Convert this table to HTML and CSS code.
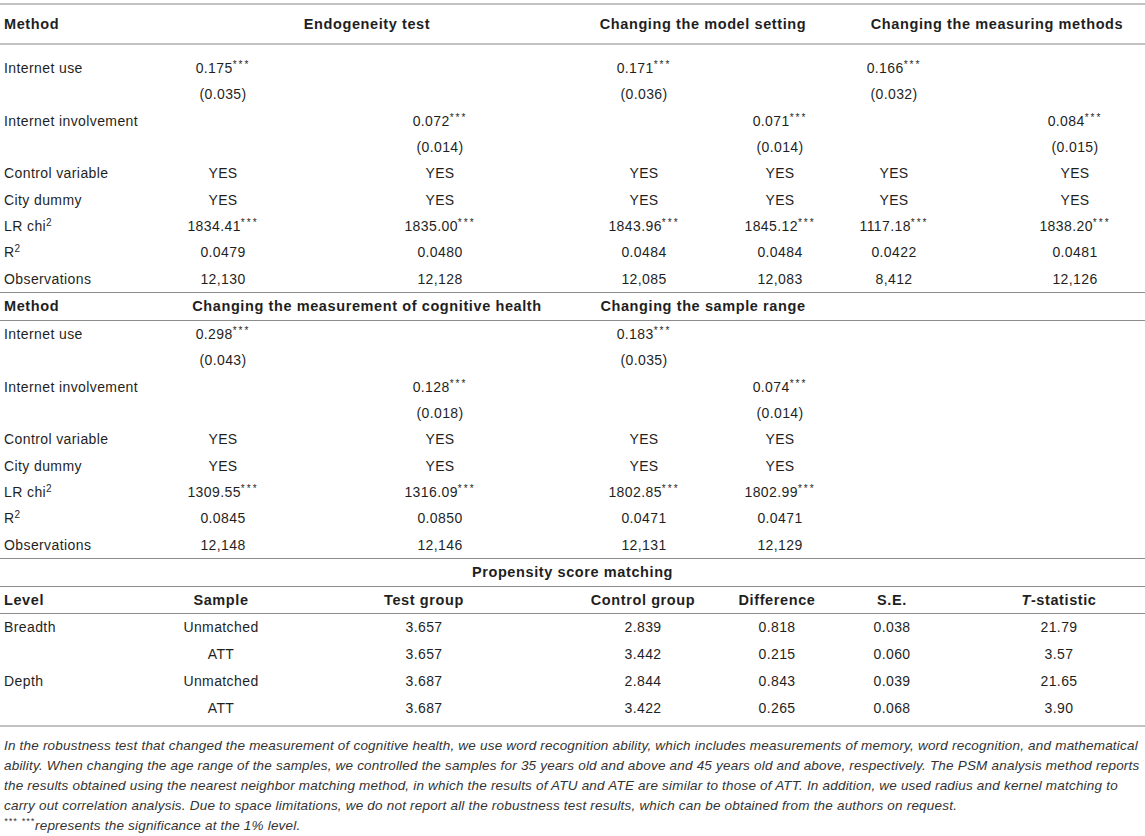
FILE: index.html
```html
<!DOCTYPE html>
<html lang="en">
<head>
  <meta charset="UTF-8">
  <meta name="viewport" content="width=device-width, initial-scale=1.0">
  <title>Robustness test</title>
  <link rel="stylesheet" href="styles.css">
</head>
<body>
  <div class="table">
    <div class="head top">
      <span>Method</span>
      <span>Endogeneity test</span>
      <span>Changing the model setting</span>
      <span>Changing the measuring methods</span>
    </div>
    <div class="rows top">
      <div class="row"><span>Internet use</span><span>0.175<sup>***</sup></span><span></span><span>0.171<sup>***</sup></span><span></span><span>0.166<sup>***</sup></span><span></span></div>
      <div class="row"><span></span><span>(0.035)</span><span></span><span>(0.036)</span><span></span><span>(0.032)</span><span></span></div>
      <div class="row"><span>Internet involvement</span><span></span><span>0.072<sup>***</sup></span><span></span><span>0.071<sup>***</sup></span><span></span><span>0.084<sup>***</sup></span></div>
      <div class="row"><span></span><span></span><span>(0.014)</span><span></span><span>(0.014)</span><span></span><span>(0.015)</span></div>
      <div class="row"><span>Control variable</span><span>YES</span><span>YES</span><span>YES</span><span>YES</span><span>YES</span><span>YES</span></div>
      <div class="row"><span>City dummy</span><span>YES</span><span>YES</span><span>YES</span><span>YES</span><span>YES</span><span>YES</span></div>
      <div class="row"><span>LR chi<sup class="pow">2</sup></span><span>1834.41<sup>***</sup></span><span>1835.00<sup>***</sup></span><span>1843.96<sup>***</sup></span><span>1845.12<sup>***</sup></span><span>1117.18<sup>***</sup></span><span>1838.20<sup>***</sup></span></div>
      <div class="row"><span>R<sup class="pow">2</sup></span><span>0.0479</span><span>0.0480</span><span>0.0484</span><span>0.0484</span><span>0.0422</span><span>0.0481</span></div>
      <div class="row"><span>Observations</span><span>12,130</span><span>12,128</span><span>12,085</span><span>12,083</span><span>8,412</span><span>12,126</span></div>
    </div>

    <div class="head">
      <span>Method</span>
      <span>Changing the measurement of cognitive health</span>
      <span>Changing the sample range</span>
      <span></span>
    </div>
    <div class="rows">
      <div class="row"><span>Internet use</span><span>0.298<sup>***</sup></span><span></span><span>0.183<sup>***</sup></span><span></span><span></span><span></span></div>
      <div class="row"><span></span><span>(0.043)</span><span></span><span>(0.035)</span><span></span><span></span><span></span></div>
      <div class="row"><span>Internet involvement</span><span></span><span>0.128<sup>***</sup></span><span></span><span>0.074<sup>***</sup></span><span></span><span></span></div>
      <div class="row"><span></span><span></span><span>(0.018)</span><span></span><span>(0.014)</span><span></span><span></span></div>
      <div class="row"><span>Control variable</span><span>YES</span><span>YES</span><span>YES</span><span>YES</span><span></span><span></span></div>
      <div class="row"><span>City dummy</span><span>YES</span><span>YES</span><span>YES</span><span>YES</span><span></span><span></span></div>
      <div class="row"><span>LR chi<sup class="pow">2</sup></span><span>1309.55<sup>***</sup></span><span>1316.09<sup>***</sup></span><span>1802.85<sup>***</sup></span><span>1802.99<sup>***</sup></span><span></span><span></span></div>
      <div class="row"><span>R<sup class="pow">2</sup></span><span>0.0845</span><span>0.0850</span><span>0.0471</span><span>0.0471</span><span></span><span></span></div>
      <div class="row"><span>Observations</span><span>12,148</span><span>12,146</span><span>12,131</span><span>12,129</span><span></span><span></span></div>
    </div>

    <div class="psm-title">Propensity score matching</div>
    <div class="psm-row psm-head"><span>Level</span><span>Sample</span><span>Test group</span><span>Control group</span><span>Difference</span><span>S.E.</span><span><i>T</i>-statistic</span></div>
    <div class="psm-rows">
      <div class="psm-row"><span>Breadth</span><span>Unmatched</span><span>3.657</span><span>2.839</span><span>0.818</span><span>0.038</span><span>21.79</span></div>
      <div class="psm-row"><span></span><span>ATT</span><span>3.657</span><span>3.442</span><span>0.215</span><span>0.060</span><span>3.57</span></div>
      <div class="psm-row"><span>Depth</span><span>Unmatched</span><span>3.687</span><span>2.844</span><span>0.843</span><span>0.039</span><span>21.65</span></div>
      <div class="psm-row"><span></span><span>ATT</span><span>3.687</span><span>3.422</span><span>0.265</span><span>0.068</span><span>3.90</span></div>
    </div>
  </div>

  <p class="note">In the robustness test that changed the measurement of cognitive health, we use word recognition ability, which includes measurements of memory, word recognition, and mathematical<br>
    ability. When changing the age range of the samples, we controlled the samples for 35 years old and above and 45 years old and above, respectively. The PSM analysis method reports<br>
    the results obtained using the nearest neighbor matching method, in which the results of ATU and ATE are similar to those of ATT. In addition, we used radius and kernel matching to<br>
    carry out correlation analysis. Due to space limitations, we do not report all the robustness test results, which can be obtained from the authors on request.<br>
    <sup>***</sup> <sup>***</sup>represents the significance at the 1% level.</p>
</body>
</html>
```

FILE: styles.css
```css
body {
  margin: 0;
  font-family: "Liberation Sans", Arial, sans-serif;
  font-size: 14px;
  letter-spacing: 0.4px;
  color: #1f1f1f;
  background: #fff;
  overflow: hidden;
}

sup {
  font-size: 10px;
  line-height: 0;
  letter-spacing: 2px;
  vertical-align: 5px;
}

sup.pow {
  letter-spacing: 0;
}

.table {
  margin-top: 3px;
  border-top: 2px solid #c2c2c2;
}

.head {
  display: grid;
  grid-template-columns: 177px 380px 292px 296px;
  align-items: center;
  height: 27px;
  border-bottom: 1px solid #8c8c8c;
  font-weight: bold;
  font-size: 14.5px;
  letter-spacing: 0.6px;
  text-align: center;
  white-space: nowrap;
}

.head > span:first-child {
  text-align: left;
  padding-left: 4px;
}

.head.top {
  height: 38px;
  border-bottom: 2px solid #c2c2c2;
}

.rows {
  border-bottom: 1px solid #8c8c8c;
}

.rows.top {
  padding-top: 10px;
}

.row,
.psm-row {
  display: grid;
  align-items: center;
  line-height: 16px;
  white-space: nowrap;
}

.row {
  grid-template-columns: 77px 292px 142px 266px 6px 222px 140px;
  height: 26.33px;
}

.row > span,
.psm-row > span {
  justify-self: center;
}

.row > span:first-child,
.psm-row > span:first-child {
  justify-self: start;
  padding-left: 4px;
}

.psm-title {
  height: 27px;
  line-height: 27px;
  border-bottom: 1px solid #8c8c8c;
  text-align: center;
  font-weight: bold;
  font-size: 14.5px;
  letter-spacing: 0.6px;
}

.psm-row {
  grid-template-columns: 137px 168px 238px 200px 68px 162px 172px;
  height: 27px;
}

.psm-head {
  height: 26px;
  border-bottom: 1px solid #8c8c8c;
  font-weight: bold;
  font-size: 14.5px;
  letter-spacing: 0.6px;
}

.psm-rows {
  padding-bottom: 3px;
  border-bottom: 2px solid #c2c2c2;
}

.note {
  margin: 9px 0 0;
  padding-left: 4px;
  font-style: italic;
  font-size: 13.5px;
  line-height: 20px;
  letter-spacing: 0.2px;
  color: #333;
}

.note sup {
  font-size: 9px;
  letter-spacing: 1px;
  vertical-align: 6px;
}
```
